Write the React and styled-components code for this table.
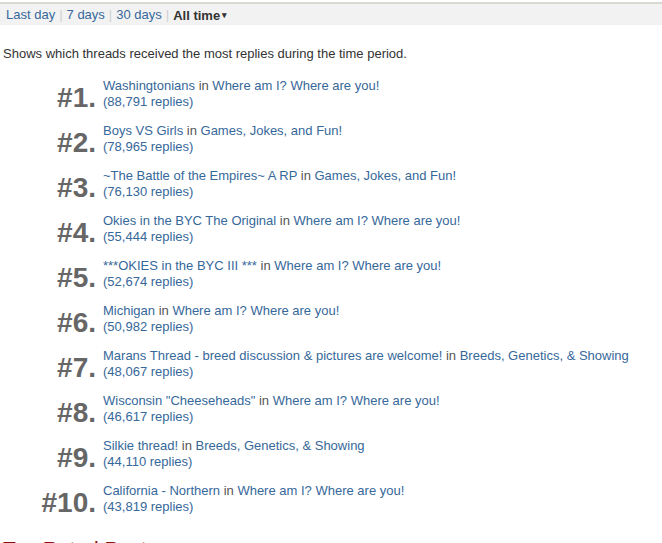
import React from 'react';
import styled, { createGlobalStyle } from 'styled-components';

const threads = [
  { title: 'Washingtonians', forum: 'Where am I? Where are you!', replies: '88,791' },
  { title: 'Boys VS Girls', forum: 'Games, Jokes, and Fun!', replies: '78,965' },
  { title: '~The Battle of the Empires~ A RP', forum: 'Games, Jokes, and Fun!', replies: '76,130' },
  { title: 'Okies in the BYC The Original', forum: 'Where am I? Where are you!', replies: '55,444' },
  { title: '***OKIES in the BYC III ***', forum: 'Where am I? Where are you!', replies: '52,674' },
  { title: 'Michigan', forum: 'Where am I? Where are you!', replies: '50,982' },
  { title: 'Marans Thread - breed discussion & pictures are welcome!', forum: 'Breeds, Genetics, & Showing', replies: '48,067' },
  { title: 'Wisconsin "Cheeseheads"', forum: 'Where am I? Where are you!', replies: '46,617' },
  { title: 'Silkie thread!', forum: 'Breeds, Genetics, & Showing', replies: '44,110' },
  { title: 'California - Northern', forum: 'Where am I? Where are you!', replies: '43,819' },
];

const periods = ['Last day', '7 days', '30 days'];

const App = () => {
  return (
    <Page>
      <GlobalStyle />
      <FilterBar>
        {periods.map((p) => (
          <React.Fragment key={p}>
            <FilterLink href="#">{p}</FilterLink>
            <Separator>|</Separator>
          </React.Fragment>
        ))}
        <Current>
          All time<Caret>▾</Caret>
        </Current>
      </FilterBar>
      <Description>
        Shows which threads received the most replies during the time period.
      </Description>
      <List>
        {threads.map((t, i) => (
          <Row key={t.title}>
            <Rank>#{i + 1}.</Rank>
            <Info>
              <div>
                <ThreadLink href="#">{t.title}</ThreadLink>
                <In> in </In>
                <ThreadLink href="#">{t.forum}</ThreadLink>
              </div>
              <ThreadLink href="#">({t.replies} replies)</ThreadLink>
            </Info>
          </Row>
        ))}
      </List>
      <NextHeading>Top Rated Posts</NextHeading>
    </Page>
  );
};

const GlobalStyle = createGlobalStyle`
  html, body {
    margin: 0;
    padding: 0;
    background: #fff;
  }
  body {
    font-family: Arial, "Liberation Sans", sans-serif;
    overflow: hidden;
  }
`;

const Page = styled.div`
  padding-top: 2px;
  font-size: 13px;
  color: #333;
`;

const FilterBar = styled.div`
  display: flex;
  align-items: center;
  height: 20px;
  padding: 1px 6px 0;
  border-top: 2px solid #d9d9d1;
  background: #f2f2f2;
  line-height: 20px;
`;

const FilterLink = styled.a`
  color: #36689a;
  text-decoration: none;
`;

const Separator = styled.span`
  color: #d0d0d0;
  margin: 0 4px;
`;

const Current = styled.span`
  font-weight: bold;
  color: #333;
`;

const Caret = styled.span`
  font-size: 9px;
  margin-left: 2px;
  vertical-align: 2px;
`;

const Description = styled.p`
  margin: 21px 0 0 3px;
  line-height: 16px;
`;

const List = styled.div`
  display: flex;
  flex-direction: column;
  gap: 13px;
  margin-top: 16px;
`;

const Row = styled.div`
  display: flex;
  align-items: flex-end;
`;

const Rank = styled.div`
  width: 96px;
  text-align: right;
  font-size: 28px;
  font-weight: bold;
  color: #666;
  line-height: 25px;
  margin-right: 7px;
`;

const Info = styled.div`
  line-height: 16px;
`;

const ThreadLink = styled.a`
  color: #36689a;
  text-decoration: none;
`;

const In = styled.span`
  color: #555;
`;

const NextHeading = styled.h2`
  margin: 22px 0 0 3px;
  font-size: 21px;
  font-weight: normal;
  color: #8b0f0f;
  line-height: 24px;
`;

export default App;
